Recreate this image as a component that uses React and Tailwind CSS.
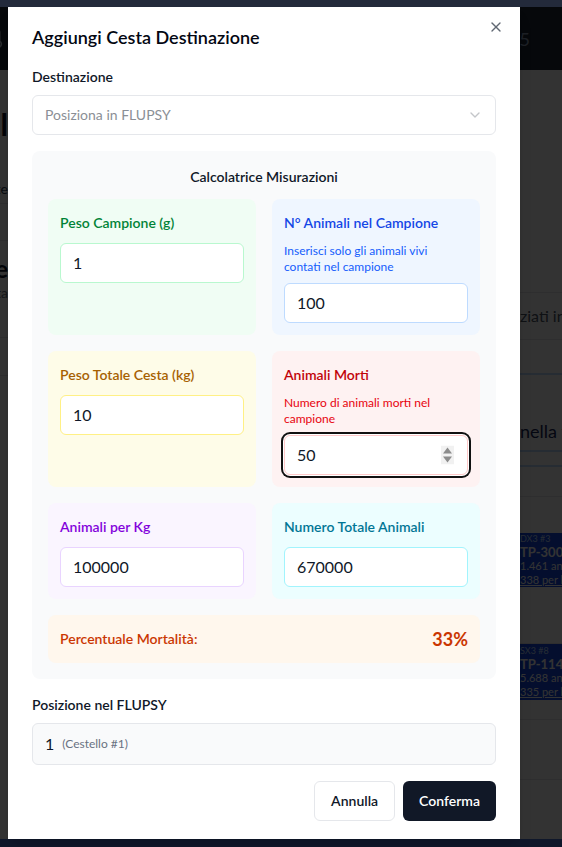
import { X, ChevronDown, Thermometer } from "lucide-react";

const CARDS = [
  {
    key: "peso",
    label: "Peso Campione (g)",
    value: "1",
    box: "bg-green-50",
    text: "text-green-700",
    input: "border-green-200",
  },
  {
    key: "animali",
    label: "N° Animali nel Campione",
    hint: "Inserisci solo gli animali vivi contati nel campione",
    value: "100",
    box: "bg-blue-50",
    text: "text-blue-700",
    hintText: "text-blue-600",
    input: "border-blue-200",
  },
  {
    key: "totale",
    label: "Peso Totale Cesta (kg)",
    value: "10",
    box: "bg-yellow-50",
    text: "text-yellow-700",
    input: "border-yellow-200",
  },
  {
    key: "morti",
    label: "Animali Morti",
    hint: "Numero di animali morti nel campione",
    value: "50",
    box: "bg-red-50",
    text: "text-red-700",
    hintText: "text-red-600",
    input: "border-red-200",
    focused: true,
  },
  {
    key: "perkg",
    label: "Animali per Kg",
    value: "100000",
    box: "bg-purple-50",
    text: "text-purple-700",
    input: "border-purple-200",
  },
  {
    key: "numero",
    label: "Numero Totale Animali",
    value: "670000",
    box: "bg-cyan-50",
    text: "text-cyan-700",
    input: "border-cyan-200",
  },
];

function BackgroundPage() {
  return (
    <div className="flex h-full flex-col bg-white">
      <header className="flex h-[70px] shrink-0 items-center justify-between border-t-[7px] border-[#232a3b] bg-[#1e293b]">
        <Thermometer className="-ml-3 h-5 w-5 text-slate-300" />
        <span className="mr-8 text-lg text-slate-400">5</span>
      </header>

      <div className="grid flex-1 grid-cols-[8px_1fr_42px]">
        {/* colonna sinistra */}
        <div className="flex flex-col overflow-hidden text-slate-700">
          <div className="mt-[40px] flex h-7 justify-end whitespace-nowrap text-3xl font-bold leading-7 text-slate-900">
            Il
          </div>
          <div className="mt-[38px] flex h-[28px] items-end justify-end whitespace-nowrap border-b border-gray-200 pb-1 text-sm">
            Elenco ceste
          </div>
          <div className="h-[37px] border-b border-gray-200" />
          <div className="mt-[14px] flex h-7 justify-end whitespace-nowrap text-2xl font-bold leading-7 text-slate-900">
            Dettaglio ceste
          </div>
          <div className="flex h-5 justify-end whitespace-nowrap text-sm text-gray-500">
            Seleziona una cesta
          </div>
          <div className="h-[35px] border-b border-gray-200" />
          <div className="h-[38px] border-b border-gray-200" />
        </div>

        <div />

        {/* colonna destra */}
        <div className="flex flex-col overflow-hidden whitespace-nowrap">
          <div className="h-[223px] shrink-0 border-b border-gray-200" />
          <div className="flex h-[47px] shrink-0 items-center border-b border-gray-200 text-base text-gray-600">
            ziati in FLUPSY
          </div>
          <div className="h-[35px] shrink-0 border-b-2 border-blue-200" />
          <div className="flex h-[77px] shrink-0 items-end border-b-2 border-blue-200 pb-[5px] text-lg leading-7 text-blue-950">
            nella fase
          </div>
          <div className="h-[15px] shrink-0 border-b-2 border-blue-200" />
          <div className="h-[30px] shrink-0 border-b border-gray-200" />
          <div className="mt-[36px] flex h-[54px] shrink-0 flex-col justify-center bg-blue-700 text-white">
            <span className="text-[9px] leading-3 text-blue-200">DX3 #3</span>
            <span className="text-[13px] font-bold leading-[14px]">TP-3000</span>
            <span className="text-[11px] leading-[14px]">1.461 animali</span>
            <span className="text-[11px] leading-[14px] underline">338 per kg</span>
          </div>
          <div className="h-[57px] shrink-0 border-b border-gray-200" />
          <div className="flex h-[56px] shrink-0 flex-col justify-center bg-blue-700 text-white">
            <span className="text-[9px] leading-3 text-blue-200">SX3 #8</span>
            <span className="text-[13px] font-bold leading-[14px]">TP-1140</span>
            <span className="text-[11px] leading-[14px]">5.688 animali</span>
            <span className="text-[11px] leading-[14px] underline">335 per kg</span>
          </div>
          <div className="h-[20px] shrink-0 border-b border-gray-200" />
          <div className="h-[60px] shrink-0 border-b border-gray-200" />
        </div>
      </div>

      <footer className="h-2 shrink-0 bg-[#0f172a]" />
    </div>
  );
}

function SpinButtons() {
  return (
    <svg
      className="absolute right-[13px] top-1/2 -translate-y-1/2"
      width="13"
      height="19"
      viewBox="0 0 13 19"
    >
      <rect x="0" y="0" width="13" height="19" fill="#f1f1f1" />
      <path d="M6.5 2 L11 8 L2 8 Z" fill="#8c8c8c" />
      <path d="M6.5 17 L11 11 L2 11 Z" fill="#8c8c8c" />
    </svg>
  );
}

function CalcCard({ card }) {
  return (
    <div className={`rounded-lg p-3 ${card.box}`}>
      <label className={`mb-2 block text-sm font-semibold leading-6 ${card.text}`}>
        {card.label}
      </label>
      {card.hint && (
        <p className={`mb-2 pr-3 text-xs leading-4 ${card.hintText}`}>{card.hint}</p>
      )}
      <div
        className={`relative flex h-10 items-center rounded-md border bg-white px-3 text-base text-gray-900 ${card.input} ${
          card.focused ? "shadow-[0_0_0_1px_#fff,0_0_0_3px_#111]" : ""
        }`}
      >
        {card.value}
        {card.focused && <SpinButtons />}
      </div>
    </div>
  );
}

export default function App() {
  return (
    <div className="relative h-[847px] w-[562px] overflow-hidden font-['Lato',sans-serif]">
      <BackgroundPage />

      <div className="absolute inset-x-0 bottom-2 top-[7px] bg-black/80" />

      <div
        role="dialog"
        className="absolute left-2 top-[7px] flex w-[512px] flex-col bg-white px-6 pb-[18px] pt-[21px] shadow-lg"
      >
        <button
          type="button"
          className="absolute right-4 top-3 text-gray-800 opacity-70"
          aria-label="Chiudi"
        >
          <X className="h-4 w-4" />
        </button>

        <h2 className="text-lg font-semibold leading-none text-gray-950">
          Aggiungi Cesta Destinazione
        </h2>

        <label className="mt-[21px] block text-sm font-semibold text-gray-900">
          Destinazione
        </label>
        <div className="mt-2 flex h-10 items-center justify-between rounded-md border border-gray-200 bg-white px-3 text-sm text-[#8b8f96]">
          <span>Posiziona in FLUPSY</span>
          <ChevronDown className="h-4 w-4 opacity-50" />
        </div>

        <div className="mt-4 rounded-lg bg-gray-50 p-4">
          <h3 className="mb-3 text-center text-sm font-semibold text-gray-900">
            Calcolatrice Misurazioni
          </h3>
          <div className="grid grid-cols-2 gap-4">
            {CARDS.map((card) => (
              <CalcCard key={card.key} card={card} />
            ))}
          </div>
          <div className="mt-4 flex items-center justify-between rounded-lg bg-orange-50 p-3 text-orange-700">
            <span className="text-sm font-semibold">Percentuale Mortalità:</span>
            <span className="text-lg font-bold leading-6">33%</span>
          </div>
        </div>

        <label className="mt-4 block text-sm font-semibold text-gray-900">
          Posizione nel FLUPSY
        </label>
        <div className="mt-2 flex h-[42px] items-center rounded-md border border-gray-200 bg-gray-50 px-3">
          <span className="text-base text-gray-900">1</span>
          <span className="ml-2 text-xs text-gray-500">(Cestello #1)</span>
        </div>

        <div className="mt-4 flex justify-end gap-2">
          <button
            type="button"
            className="h-10 rounded-md border border-gray-200 bg-white px-4 text-sm font-semibold text-gray-900"
          >
            Annulla
          </button>
          <button
            type="button"
            className="h-10 rounded-md bg-[#111827] px-4 text-sm font-semibold text-white"
          >
            Conferma
          </button>
        </div>
      </div>
    </div>
  );
}
